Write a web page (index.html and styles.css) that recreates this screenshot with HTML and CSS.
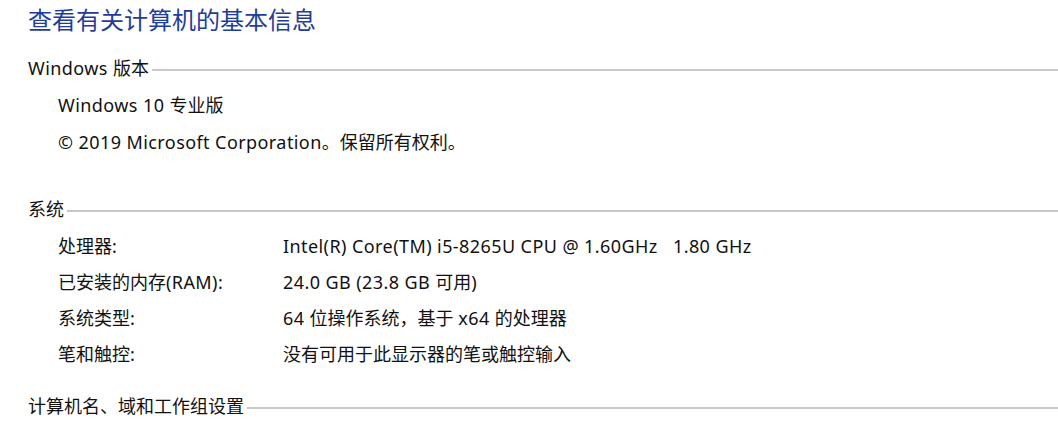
FILE: index.html
```html
<!DOCTYPE html>
<html lang="zh-CN">
<head>
<meta charset="utf-8">
<title>系统</title>
<link rel="stylesheet" href="styles.css">
</head>
<body>
<div class="page">
  <h1 class="title">查看有关计算机的基本信息</h1>

  <section class="section sec-edition">
    <div class="sec-head"><span class="sec-name"><span class="lat">Windows </span>版本</span><span class="rule"></span></div>
    <div class="rows rows-edition">
      <div class="row"><span class="lat">Windows 10 </span>专业版</div>
      <div class="row"><span class="lat">© 2019 Microsoft Corporation</span>。保留所有权利。</div>
    </div>
  </section>

  <section class="section sec-system">
    <div class="sec-head"><span class="sec-name">系统</span><span class="rule"></span></div>
    <div class="rows rows-system">
      <div class="row kv"><span class="k">处理器:</span><span class="v lat">Intel(R) Core(TM) i5-8265U CPU @ 1.60GHz&nbsp;&nbsp;&nbsp;1.80 GHz</span></div>
      <div class="row kv"><span class="k">已安装的内存<span class="lat">(RAM):</span></span><span class="v"><span class="lat">24.0 GB (23.8 GB </span>可用<span class="lat">)</span></span></div>
      <div class="row kv"><span class="k">系统类型:</span><span class="v"><span class="lat">64 </span>位操作系统，基于 <span class="lat">x64 </span>的处理器</span></div>
      <div class="row kv"><span class="k">笔和触控:</span><span class="v">没有可用于此显示器的笔或触控输入</span></div>
    </div>
  </section>

  <section class="section sec-name-group">
    <div class="sec-head"><span class="sec-name">计算机名、域和工作组设置</span><span class="rule"></span></div>
  </section>
</div>
</body>
</html>
```
FILE: styles.css
```css
html, body {
  margin: 0;
  padding: 0;
  background: #ffffff;
}
body {
  font-family: "Noto Sans", "Noto Sans CJK SC", sans-serif;
  font-size: 18px;
  color: #111111;
  overflow: hidden;
}
.page {
  padding-left: 28px;
}
.title {
  margin: 0;
  font-family: "Noto Sans CJK SC", sans-serif;
  font-weight: normal;
  font-size: 24px;
  line-height: 38px;
  color: #1f3d99;
}
.lat {
  letter-spacing: 0.42px;
}
.sec-head {
  display: flex;
  align-items: flex-start;
  height: 24px;
  line-height: 24px;
}
.sec-name {
  white-space: nowrap;
}
.rule {
  flex: 1;
  height: 2px;
  margin-top: 13px;
  margin-left: 3px;
  background: #c8c8c8;
}
.sec-edition { margin-top: 18px; }
.sec-system { margin-top: 36px; }
.sec-name-group { margin-top: 22px; }
.rows {
  padding-left: 30px;
}
.rows-edition { padding-top: 7px; }
.rows-edition .row { line-height: 37px; }
.rows-system { padding-top: 7px; }
.rows-system .row { line-height: 36px; }
.kv {
  display: grid;
  grid-template-columns: 225px 1fr;
}
.v { white-space: pre; }
```
